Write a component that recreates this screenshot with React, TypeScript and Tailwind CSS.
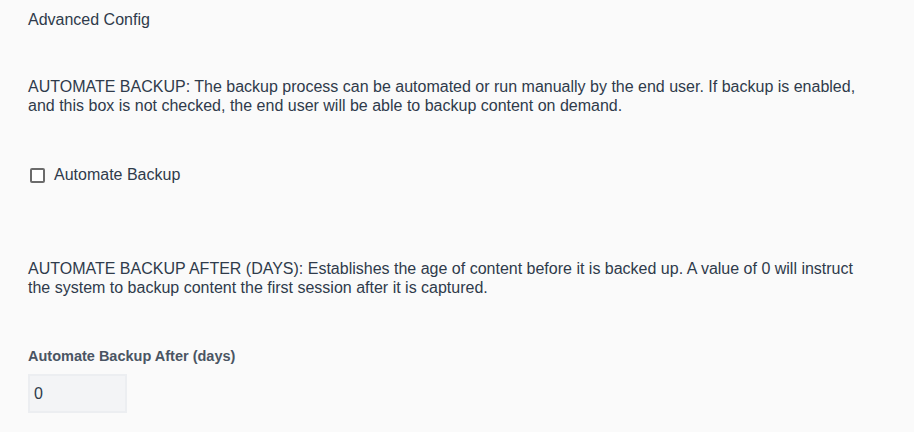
import React, { useState } from 'react';

const App: React.FC = () => {
  const [automate, setAutomate] = useState<boolean>(false);
  const [days, setDays] = useState<string>('0');

  return (
    <div className="min-h-[432px] w-full bg-[#fafafa] px-[28px] text-[#2f3b4b] font-['Liberation_Sans',Arial,sans-serif]">
      <div className="pt-[10px] text-[16px] leading-[20px]">Advanced Config</div>

      <p className="mt-[47px] max-w-[840px] text-[16px] leading-[19px]">
        AUTOMATE BACKUP: The backup process can be automated or run manually by the end user. If backup is enabled,
        and this box is not checked, the end user will be able to backup content on demand.
      </p>

      <label className="mt-[50px] flex items-center gap-[9px] text-[16px] leading-[20px]">
        <input
          type="checkbox"
          checked={automate}
          onChange={(e) => setAutomate(e.target.checked)}
          className="ml-[2px] mt-[1px] h-[15px] w-[15px] appearance-none rounded-[2px] border-2 border-[#6b6b6b] bg-white"
        />
        Automate Backup
      </label>

      <p className="mt-[74px] max-w-[840px] text-[16px] leading-[19px]">
        AUTOMATE BACKUP AFTER (DAYS): Establishes the age of content before it is backed up. A value of 0 will instruct
        the system to backup content the first session after it is captured.
      </p>

      <div className="mt-[50px] text-[14.5px] font-bold leading-[18px] text-[#4a5563]">Automate Backup After (days)</div>
      <input
        type="text"
        value={days}
        onChange={(e) => setDays(e.target.value)}
        className="mt-[9px] h-[39px] w-[99px] border-2 border-[#eceef1] bg-[#f3f4f6] px-[4px] text-[16px] text-[#2f3b4b] outline-none"
      />
    </div>
  );
};

export default App;
